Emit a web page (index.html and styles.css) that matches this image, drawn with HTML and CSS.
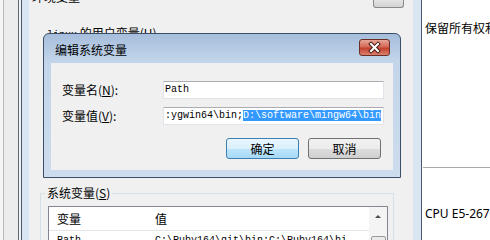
FILE: index.html
```html
<!DOCTYPE html>
<html lang="zh-CN">
<head>
    <meta charset="UTF-8">
    <meta name="viewport" content="width=device-width, initial-scale=1.0">
    <title>编辑系统变量</title>
    <link rel="stylesheet" href="styles.css">
</head>
<body>
    <div class="desk">
        <div class="sysprops"></div>
        <div class="envdlg">
            <div class="env-client">
                <div class="env-top">
                    <span class="env-cut">环境变量</span>
                    <span class="env-topbtn"></span>
                </div>
                <div class="env-user"><span class="mono">linux</span> 的用户变量(<u>U</u>)</div>
                <fieldset class="group">
                    <legend>系统变量(<u>S</u>)</legend>
                    <div class="listview">
                        <div class="lv-table">
                            <div class="lv-head">
                                <span class="lv-col1">变量</span>
                                <span class="lv-col2">值</span>
                            </div>
                            <div class="lv-row">
                                <span class="lv-col1">Path</span>
                                <span class="lv-col2">C:\Ruby164\git\bin;C:\Ruby164\bi</span>
                            </div>
                        </div>
                        <div class="scrollbar">
                            <span class="sb-up"></span>
                            <span class="sb-thumb"></span>
                        </div>
                    </div>
                </fieldset>
            </div>
        </div>
        <div class="sysinfo">
            <p class="rights">保留所有权利。</p>
            <hr>
            <p class="cpu">CPU E5-2670 v2 @ 2.50GHz</p>
        </div>
    </div>

    <div class="editdlg">
        <div class="dlg-title">
            编辑系统变量
            <span class="dlg-close">
                <svg width="29" height="15" viewBox="0 0 29 15">
                    <path d="M11 4 L18 11 M18 4 L11 11" stroke="#4a1e18" stroke-width="4" stroke-linecap="square"/>
                    <path d="M11 4 L18 11 M18 4 L11 11" stroke="#fff" stroke-width="2" stroke-linecap="square"/>
                </svg>
            </span>
        </div>
        <div class="dlg-client">
            <div class="dlg-form">
                <label class="dlg-label">变量名(<u>N</u>):</label>
                <div class="textbox">Path</div>
                <label class="dlg-label">变量值(<u>V</u>):</label>
                <div class="textbox">:ygwin64\bin;<span class="sel">D:\software\mingw64\bin</span></div>
            </div>
            <div class="dlg-buttons">
                <button class="btn btn-default">确定</button>
                <button class="btn">取消</button>
            </div>
        </div>
    </div>
</body>
</html>
```

FILE: styles.css
```css
html, body {
    margin: 0;
    padding: 0;
}

body {
    width: 490px;
    height: 240px;
    overflow: hidden;
    position: relative;
    font-family: "Noto Sans CJK SC", "Noto Sans", sans-serif;
    font-size: 12px;
    color: #000;
    background: #f3f3f3;
}

.mono {
    font-family: "Liberation Mono", monospace;
    font-size: 10px;
}

.desk {
    display: flex;
    height: 240px;
}

/* window behind, only its edge shows */
.sysprops {
    width: 19px;
    border-right: 1px solid #5d6977;
    margin-right: 2px;
    box-sizing: border-box;
    background: linear-gradient(to right, #f6f6f6 0 3px, #b9b9b9 3px 4px, #ececec 4px);
}

.envdlg {
    width: 401px;
    box-sizing: border-box;
    border-left: 1px solid #4a5a6c;
    border-right: 1px solid #4a5a6c;
    background: #d9e5f2;
    padding: 0 8px 0 7px;
}

.env-client {
    background: #f0f0f0;
    height: 240px;
    overflow: hidden;
}

.env-top {
    height: 8px;
    display: flex;
    justify-content: space-between;
}

.env-cut {
    margin-top: -10px;
    padding-left: 3px;
    line-height: 14px;
}

.env-topbtn {
    width: 31px;
    height: 8px;
    margin-right: 9px;
    box-sizing: border-box;
    border: 1px solid #8a8a8a;
    border-top: none;
    border-radius: 0 0 3px 3px;
    background: linear-gradient(#e4e4e4, #d2d2d2);
}

.env-user {
    margin-top: 18px;
    padding-left: 18px;
    line-height: 14px;
}

.group {
    margin: 143px 19px 0 11px;
    border: 1px solid #d5dfe5;
    padding: 6px 5px 0 7px;
}

.group legend {
    padding: 0 2px;
    margin-left: -3px;
    line-height: 14px;
}

.listview {
    display: flex;
    height: 60px;
    border: 1px solid #828790;
    background: #fff;
}

.lv-table {
    flex: 1;
}

.lv-head {
    display: flex;
    align-items: center;
    height: 23px;
    border-bottom: 1px solid #e5e5e5;
}

.lv-row {
    display: flex;
    align-items: center;
    height: 18px;
    font-family: "Liberation Mono", monospace;
    font-size: 10px;
}

.lv-col1 {
    width: 98px;
    padding-left: 8px;
}

.lv-col2 {
    white-space: nowrap;
}

.scrollbar {
    width: 18px;
    display: flex;
    flex-direction: column;
    align-items: center;
    background: #f4f4f4;
}

.sb-up {
    margin-top: 8px;
    width: 0;
    height: 0;
    border-left: 3px solid transparent;
    border-right: 3px solid transparent;
    border-bottom: 3px solid #4d4d4d;
}

.sb-thumb {
    margin-top: 18px;
    width: 15px;
    height: 20px;
    box-sizing: border-box;
    border: 1px solid #9a9a9a;
    border-radius: 2px;
    background: #eaeaea;
}

.sysinfo {
    flex: 1;
    background: #fff;
    padding-left: 3px;
    white-space: nowrap;
    overflow: hidden;
}

.rights {
    margin: 20px 0 0;
    line-height: 16px;
}

.sysinfo hr {
    margin: 131px 0 0 -2px;
    border: 0;
    border-top: 1px solid #a9a9a9;
    height: 0;
}

.cpu {
    margin: 38px 0 0;
    line-height: 16px;
    font-family: "Noto Sans", sans-serif;
}

/* the dialog floating on top */
.editdlg {
    position: absolute;
    left: 43px;
    top: 33px;
    width: 358px;
    height: 145px;
    box-sizing: border-box;
    border: 1px solid #3b4e66;
    border-radius: 6px 6px 0 0;
    background: linear-gradient(#a6bedc, #c3d5ea 28px, #cddcee);
    padding: 0 7px 7px;
    display: flex;
    flex-direction: column;
}

.dlg-title {
    position: relative;
    height: 29px;
    box-sizing: border-box;
    padding: 9px 0 0 4px;
    line-height: 14px;
    color: #000;
}

.dlg-close {
    position: absolute;
    right: 3px;
    top: 5px;
    width: 31px;
    height: 17px;
    box-sizing: border-box;
    border: 1px solid #6b2e27;
    border-radius: 3px;
    background: linear-gradient(#e7a797, #d36a57 45%, #c2412e 55%, #db806d);
}

.dlg-close svg {
    display: block;
}

.dlg-client {
    flex: 1;
    background: #f0f0f0;
}

.dlg-form {
    display: grid;
    grid-template-columns: 101px 221px;
    row-gap: 8px;
    padding: 18px 0 0 11px;
}

.dlg-label {
    line-height: 18px;
}

.textbox {
    height: 18px;
    box-sizing: border-box;
    border: 1px solid #e2e3ea;
    border-top-color: #abadb3;
    background: #fff;
    padding-left: 1px;
    font-family: "Liberation Mono", monospace;
    font-size: 10px;
    line-height: 15px;
    white-space: nowrap;
    overflow: hidden;
}

.sel {
    background: #3399ff;
    color: #fff;
}

.dlg-buttons {
    display: flex;
    justify-content: flex-end;
    gap: 9px;
    padding-right: 12px;
    margin-top: 13px;
}

.btn {
    width: 73px;
    height: 21px;
    padding: 0;
    border: 1px solid #707070;
    border-radius: 3px;
    background: linear-gradient(#f2f2f2, #ebebeb 50%, #dddddd 50%, #cfcfcf);
    font-family: "Noto Sans CJK SC", sans-serif;
    font-size: 12px;
    color: #000;
}

.btn-default {
    border-color: #3c7fb1;
    background: linear-gradient(#eaf6fd, #d9f0fc 50%, #bee6fd 50%, #a7d9f5);
}
```
